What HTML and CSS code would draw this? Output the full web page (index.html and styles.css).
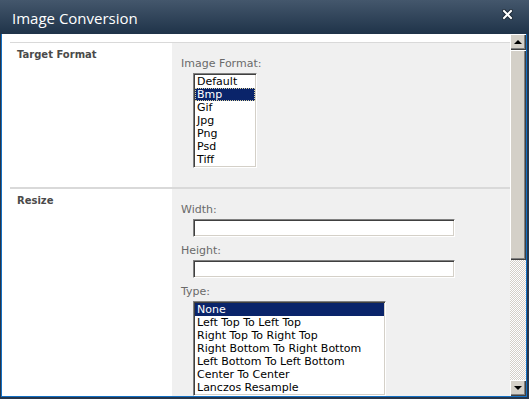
FILE: index.html
```html
<!DOCTYPE html>
<html lang="en">
<head>
    <meta charset="UTF-8">
    <meta name="viewport" content="width=device-width, initial-scale=1.0">
    <title>Image Conversion</title>
    <link rel="stylesheet" href="styles.css">
</head>
<body>
    <div class="dialog">
        <!-- Title bar -->
        <div class="titlebar">
            <span class="title">Image Conversion</span>
            <svg class="close" width="11" height="11" viewBox="0 0 11 11">
                <path d="M2 2 L9 9 M9 2 L2 9" stroke="#1a2633" stroke-width="4" stroke-linecap="square"/>
                <path d="M2 2 L9 9 M9 2 L2 9" stroke="#ffffff" stroke-width="2" stroke-linecap="square"/>
            </svg>
        </div>

        <div class="frame">
            <div class="content">
                <!-- Target Format -->
                <div class="section first">
                    <div class="section-label">Target Format</div>
                    <div class="section-fields">
                        <div class="field-label">Image Format:</div>
                        <div class="listbox format-list">
                            <div class="option">Default</div>
                            <div class="option selected focused">Bmp</div>
                            <div class="option">Gif</div>
                            <div class="option">Jpg</div>
                            <div class="option">Png</div>
                            <div class="option">Psd</div>
                            <div class="option">Tiff</div>
                        </div>
                    </div>
                </div>

                <!-- Resize -->
                <div class="section">
                    <div class="section-label">Resize</div>
                    <div class="section-fields">
                        <div class="field-label">Width:</div>
                        <div class="textbox"></div>
                        <div class="field-label">Height:</div>
                        <div class="textbox"></div>
                        <div class="field-label">Type:</div>
                        <div class="listbox type-list">
                            <div class="option selected">None</div>
                            <div class="option">Left Top To Left Top</div>
                            <div class="option">Right Top To Right Top</div>
                            <div class="option">Right Bottom To Right Bottom</div>
                            <div class="option">Left Bottom To Left Bottom</div>
                            <div class="option">Center To Center</div>
                            <div class="option">Lanczos Resample</div>
                        </div>
                    </div>
                </div>
            </div>

            <!-- Scrollbar -->
            <div class="scrollbar">
                <div class="sb-button"><span class="arrow-up"></span></div>
                <div class="sb-thumb"></div>
                <div class="sb-track"></div>
                <div class="sb-button"><span class="arrow-down"></span></div>
            </div>
        </div>
    </div>
</body>
</html>
```

FILE: styles.css
```css
/* General Styles */
body {
    margin: 0;
    padding: 0;
    font-family: "DejaVu Sans", Verdana, sans-serif;
    font-size: 11px;
    overflow: hidden;
}

.dialog {
    width: 529px;
    height: 399px;
    background: #27364a;
    display: flex;
    flex-direction: column;
}

/* Title bar */
.titlebar {
    height: 34px;
    flex: none;
    background: linear-gradient(#44576c, #1f3349);
    display: flex;
    align-items: center;
    justify-content: space-between;
    padding: 0 16px 0 12px;
}

.title {
    font-family: "Open Sans", sans-serif;
    font-size: 15px;
    line-height: 34px;
    color: #ffffff;
    padding-top: 1px;
}

.close {
    margin-top: -6px;
}

/* Frame */
.frame {
    flex: 1;
    min-height: 0;
    margin: 0 2px 2px 1px;
    border: 1px solid #1370c4;
    border-top: none;
    background: #ffffff;
    display: flex;
}

.content {
    flex: 1;
    overflow: hidden;
    padding: 8px 0 0 8px;
}

/* Sections */
.section {
    display: grid;
    grid-template-columns: 162px 1fr;
    border-top: 2px solid #d9d9d9;
}

.section.first {
    border-top-width: 1px;
}

.section-label {
    padding: 5px 7px;
    font-size: 10px;
    line-height: 14px;
    font-weight: bold;
    color: #4a4a4a;
}

.section-fields {
    background: #f0f0f0;
    padding: 14px 9px 19px;
}

.field-label {
    line-height: 14px;
    color: #6a6a6a;
    margin-bottom: 2px;
}

/* Controls */
.textbox,
.listbox {
    margin-left: 12px;
    background: #ffffff;
    border: 1px solid;
    border-color: #808080 #ffffff #ffffff #808080;
    box-shadow: inset 1px 1px #404040, inset -1px -1px #d4d0c8;
    box-sizing: border-box;
}

.textbox {
    width: 262px;
    height: 18px;
    margin-bottom: 7px;
}

.listbox {
    padding: 1px;
    color: #000000;
}

.format-list {
    width: 64px;
}

.type-list {
    width: 193px;
}

.option {
    height: 13px;
    line-height: 13px;
    padding-left: 2px;
    white-space: nowrap;
}

.option.selected {
    background: #0a246a;
    color: #ffffff;
}

.option.focused {
    outline: 1px dotted #d8d0a0;
    outline-offset: -1px;
}

/* Scrollbar */
.scrollbar {
    width: 16px;
    flex: none;
    display: flex;
    flex-direction: column;
}

.sb-button,
.sb-thumb {
    background: #d4d0c8;
    box-shadow: inset 1px 1px #ffffff, inset -1px -1px #404040, inset -2px -2px #808080;
}

.sb-button {
    height: 16px;
    flex: none;
    display: flex;
    align-items: center;
    justify-content: center;
}

.sb-thumb {
    height: 210px;
    flex: none;
}

.sb-track {
    flex: 1;
    background: repeating-conic-gradient(#d4d0c8 0 25%, #ffffff 0 50%) 0 0 / 2px 2px;
}

.arrow-up {
    width: 0;
    height: 0;
    border-left: 4px solid transparent;
    border-right: 4px solid transparent;
    border-bottom: 4px solid #000000;
    margin-top: -1px;
}

.arrow-down {
    width: 0;
    height: 0;
    border-left: 4px solid transparent;
    border-right: 4px solid transparent;
    border-top: 4px solid #000000;
}
```
